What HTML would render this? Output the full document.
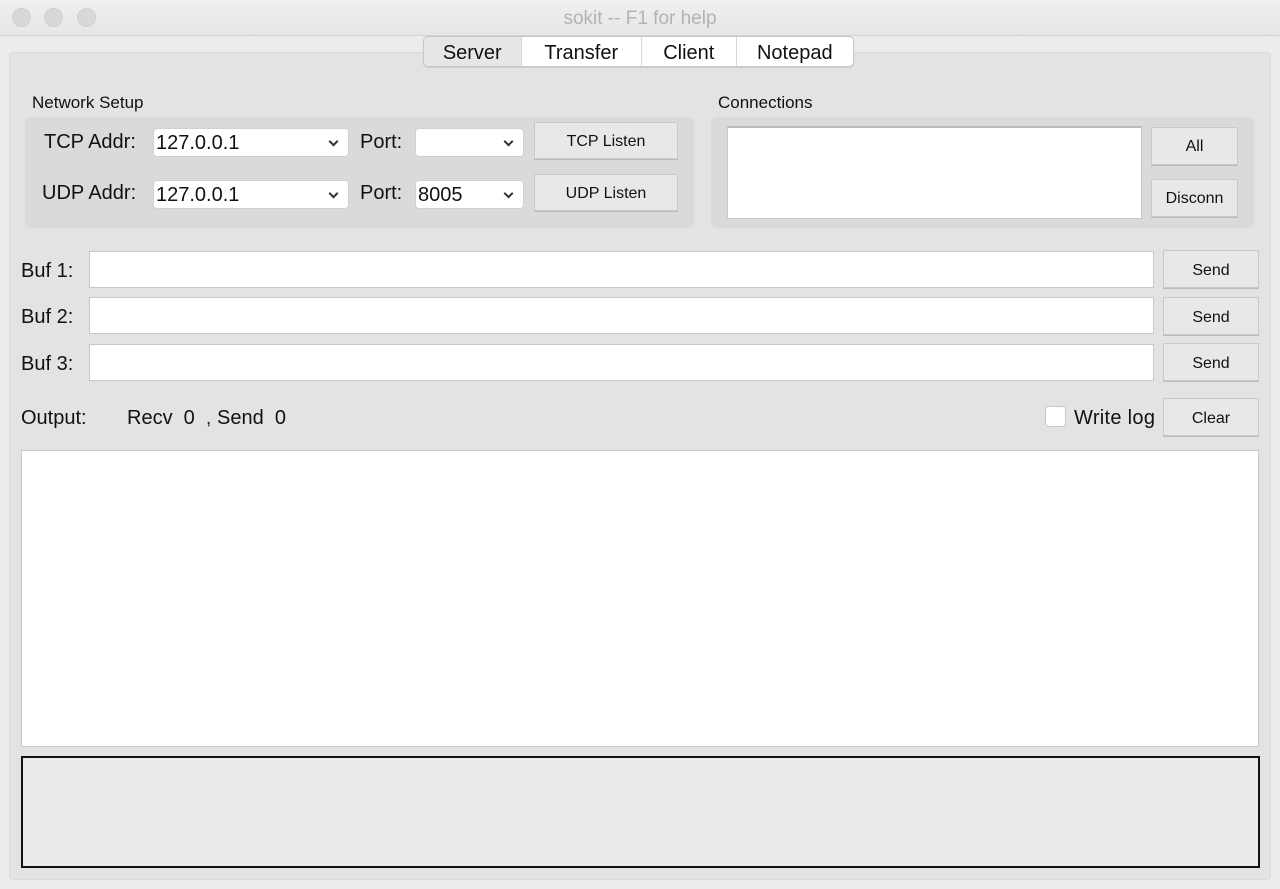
<!DOCTYPE html>
<html><head><style>
*{box-sizing:border-box;margin:0;padding:0}
body{width:1280px;height:889px;background:#ececec;font-family:"Liberation Sans",sans-serif;color:#111;position:relative;overflow:hidden}
.a{position:absolute}
.title{left:0;top:0;width:1280px;height:36px;background:linear-gradient(#f0f0f0,#e6e6e6);border-bottom:1px solid #d4d4d4;text-align:center;font-size:19px;line-height:37px;color:#b3b3b3}
.dot{width:19px;height:19px;border-radius:50%;background:#d8d8d8;top:8px;border:1px solid #cfcfcf}
.pane{left:9px;top:52px;width:1262px;height:828px;background:#e3e3e3;border:1px solid #dadada;border-radius:4px}
.tabs{left:423px;top:36px;width:431px;height:31px;background:#fff;border:1px solid #c6c6c6;border-radius:5px;display:flex;overflow:hidden;box-shadow:0 1px 1px rgba(0,0,0,.1)}
.tabs div{font-size:20px;line-height:32px;text-align:center;border-right:1px solid #d8d8d8}
.grp{background:#dadada;border-radius:6px}
.lbl{font-size:20px}
.small{font-size:17px}
.combo{background:#fff;border-radius:3px;height:27px;font-size:20px;line-height:28px;padding-left:2px;box-shadow:0 0 0 1px #d0d0d0}
.combo:after{content:"";position:absolute;right:11px;top:9px;width:5px;height:5px;border-right:2px solid #333;border-bottom:2px solid #333;transform:rotate(45deg)}
.btn{background:#e8e8e8;border:1px solid #c9c9c9;font-size:16px;text-align:center;box-shadow:0 1px 0 #bbb}
.inp{background:#fff;border:1px solid #c8c8c8}
</style></head><body>
<div class="a title">sokit -- F1 for help</div>
<div class="a dot" style="left:12px"></div>
<div class="a dot" style="left:44px"></div>
<div class="a dot" style="left:77px"></div>
<div class="a pane"></div>
<div class="a tabs"><div style="width:98px;background:#e6e6e6">Server</div><div style="width:121px">Transfer</div><div style="width:95px">Client</div><div style="width:117px;border:0">Notepad</div></div>

<div class="a small" style="left:32px;top:93px">Network Setup</div>
<div class="a grp" style="left:25px;top:117px;width:669px;height:111px"></div>
<div class="a lbl" style="left:44px;top:131px">TCP Addr:</div>
<div class="a combo" style="left:154px;top:129px;width:194px">127.0.0.1</div>
<div class="a lbl" style="left:360px;top:131px">Port:</div>
<div class="a combo" style="left:416px;top:129px;width:107px"></div>
<div class="a btn" style="left:534px;top:122px;width:144px;height:37px;line-height:37px">TCP Listen</div>
<div class="a lbl" style="left:42px;top:182px">UDP Addr:</div>
<div class="a combo" style="left:154px;top:181px;width:194px">127.0.0.1</div>
<div class="a lbl" style="left:360px;top:182px">Port:</div>
<div class="a combo" style="left:416px;top:181px;width:107px">8005</div>
<div class="a btn" style="left:534px;top:174px;width:144px;height:37px;line-height:37px">UDP Listen</div>

<div class="a small" style="left:718px;top:93px">Connections</div>
<div class="a grp" style="left:711px;top:117px;width:543px;height:111px"></div>
<div class="a inp" style="left:727px;top:126px;width:415px;height:93px;border-top:2px solid #bbb"></div>
<div class="a btn" style="left:1151px;top:127px;width:87px;height:38px;line-height:38px">All</div>
<div class="a btn" style="left:1151px;top:179px;width:87px;height:38px;line-height:38px">Disconn</div>

<div class="a lbl" style="left:21px;top:260px">Buf 1:</div>
<div class="a inp" style="left:89px;top:251px;width:1065px;height:37px"></div>
<div class="a btn" style="left:1163px;top:250px;width:96px;height:38px;line-height:39px">Send</div>
<div class="a lbl" style="left:21px;top:306px">Buf 2:</div>
<div class="a inp" style="left:89px;top:297px;width:1065px;height:37px"></div>
<div class="a btn" style="left:1163px;top:297px;width:96px;height:38px;line-height:39px">Send</div>
<div class="a lbl" style="left:21px;top:353px">Buf 3:</div>
<div class="a inp" style="left:89px;top:344px;width:1065px;height:37px"></div>
<div class="a btn" style="left:1163px;top:343px;width:96px;height:38px;line-height:39px">Send</div>

<div class="a lbl" style="left:21px;top:407px">Output:</div>
<div class="a lbl" style="left:127px;top:407px">Recv&nbsp; 0&nbsp; <span style="color:#234">,</span> Send&nbsp; 0</div>
<div class="a" style="left:1045px;top:406px;width:21px;height:21px;background:#fff;border:1px solid #c8c8c8;border-radius:4px"></div>
<div class="a lbl" style="left:1074px;top:407px;letter-spacing:.3px">Write log</div>
<div class="a btn" style="left:1163px;top:398px;width:96px;height:38px;line-height:39px">Clear</div>

<div class="a inp" style="left:21px;top:450px;width:1238px;height:297px"></div>
<div class="a" style="left:21px;top:756px;width:1239px;height:112px;border:2px solid #111;background:#ebebeb"></div>
</body></html>
